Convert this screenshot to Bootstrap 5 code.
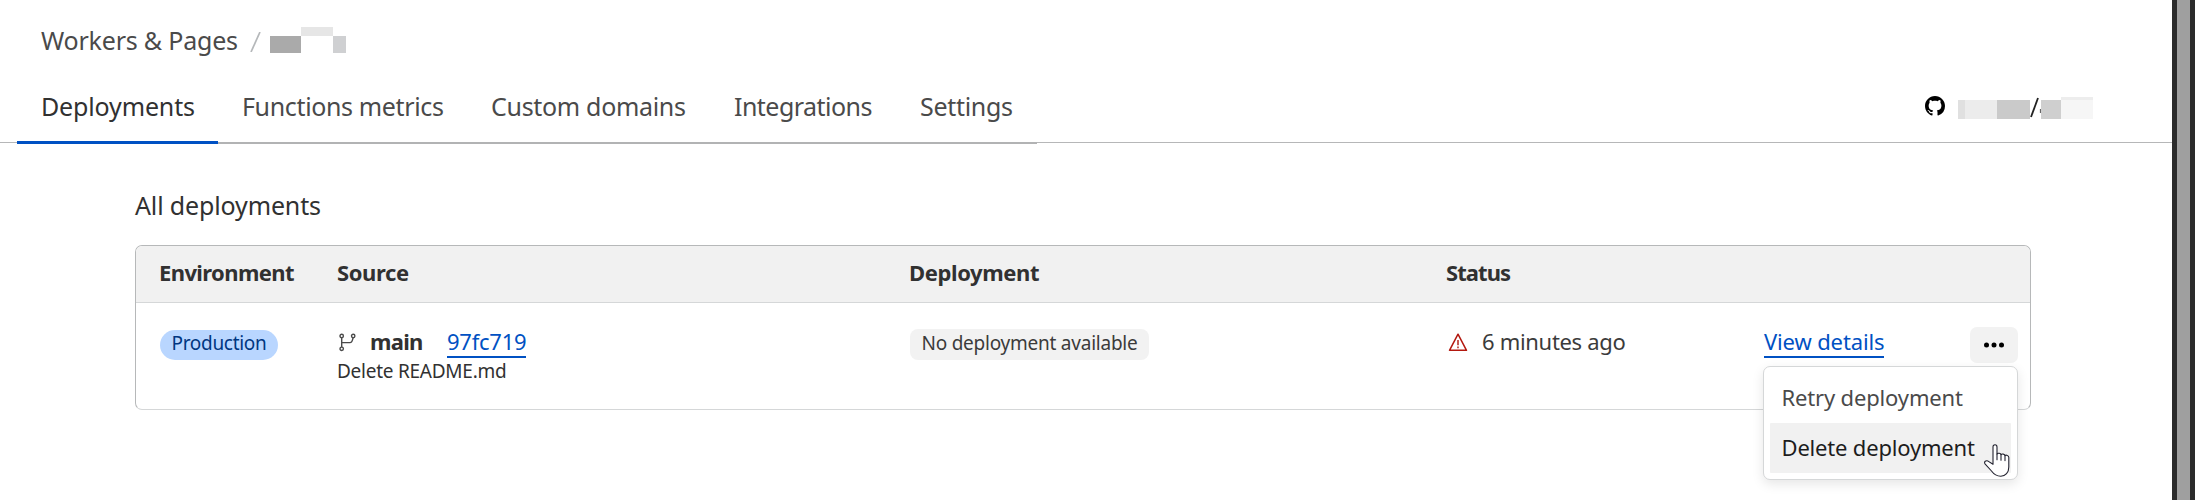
<!DOCTYPE html>
<html lang="en">
<head>
<meta charset="utf-8">
<title>Workers &amp; Pages</title>
<link href="https://cdn.jsdelivr.net/npm/bootstrap@5.3.0/dist/css/bootstrap.min.css" rel="stylesheet">
<script src="https://cdn.jsdelivr.net/npm/bootstrap@5.3.0/dist/js/bootstrap.bundle.min.js"></script>
<style>
body{font-family:"Noto Sans",sans-serif;font-size:22px;color:#313131;height:500px;overflow:hidden;background:#fff}
.page-main{width:2172px}
.window-edge{width:23px;background:#9f9f9f;border:solid #2b2b2b;border-width:0 5px}
.crumbs{padding:20px 0 0 41px;height:60px;font-size:25px;line-height:40px;color:#4a4a4a;letter-spacing:-.2px}
.crumb-slash{margin-left:12px;width:11px;height:20px;margin-top:12px}
.crumb-blocks{margin:7px 0 0 9px}
.tabbar{height:83px;border-bottom:1px solid #b6b7b8}
.tabs{padding-left:17px;margin-bottom:-2px;font-size:25px;line-height:40px}
.tabs .tab{padding:0 0 16px 24px;border-bottom:2px solid #b2b3b4;color:#4a4a4a;white-space:nowrap;text-decoration:none}
.tabs .tab.active{padding-bottom:15px;border-bottom:3px solid #0051c3;color:#313131}
.repo{margin:0 78px 23px 0}
.section-title{margin:42px 0 0 135px;font-size:25px;line-height:40px;letter-spacing:-.14px;font-weight:400}
.deploys{width:1896px;margin:20px 0 0 135px;border:1px solid #b6b8b9;border-bottom-color:#d5d7d8;border-radius:7px}
.deploys .cols{display:grid;grid-template-columns:178px 572px 537px 317px 1fr;padding-left:24px}
.head-row{height:57px;line-height:53px;font-weight:700;background:#f1f1f1;border-bottom:1px solid #d5d7d8;border-radius:6px 6px 0 0}
.head-row span{margin-left:-1px}
.body-row{height:106px;padding-top:24px;line-height:29px}
.pill{display:inline-block;margin-top:2px;height:30px;width:118px;text-align:center;line-height:27px;border-radius:15px;background:#b9d6ff;color:#003681;font-size:19px;letter-spacing:-.3px}
.none{display:inline-block;margin-top:1px;height:31px;width:239px;text-align:center;line-height:29px;border-radius:8px;background:#f2f2f2;font-size:19px;letter-spacing:-.237px;color:#3b3b3b}
.lnk{display:inline-block;color:#0051c3;border-bottom:2px solid #0051c3;text-decoration:none;white-space:nowrap}
.commit{font-size:19px;line-height:24px;letter-spacing:-.25px;margin:1px 0 0 -1px}
.more{position:relative;width:48px;height:36px;border-radius:7px;background:#f2f2f2}
.menu{position:absolute;right:0;top:39px;width:255px;height:114px;padding:6px;background:#fff;border:1px solid #d5d7d8;border-radius:7px;box-shadow:0 4px 12px rgba(0,0,0,.1)}
.menu .item{height:50px;line-height:49px;padding-left:11.500px;color:#4a4a4a;white-space:nowrap;letter-spacing:-.158px}
.menu .item.hot{background:#f1f1f1;color:#1d1d1d;border-radius:1px;letter-spacing:-.183px}
.pointer{position:absolute;left:220px;top:77px}
</style>
</head>
<body class="d-flex">
<main class="page-main flex-shrink-0">
  <div class="crumbs d-flex">
    <span>Workers &amp; Pages</span>
    <svg class="crumb-slash" viewBox="0 0 11 20"><path d="M1 20 10 0" stroke="#b5b8ba" stroke-width="1.7" fill="none"/></svg>
    <svg class="crumb-blocks" width="76" height="26" viewBox="0 0 76 26" shape-rendering="crispEdges"><path fill="#aaa" d="M0 9h31v17H0z"/><path fill="#e6e6e6" d="M31 0h32v9H31z"/><path fill="#cfd0d2" d="M63 9h13v17H63z"/></svg>
  </div>
  <div class="tabbar d-flex justify-content-between align-items-end">
    <nav class="tabs d-flex align-items-end">
      <a class="tab active" style="width:201px;letter-spacing:-.15px">Deployments</a>
      <a class="tab" style="width:249px;letter-spacing:-.355px">Functions metrics</a>
      <a class="tab" style="width:243px;letter-spacing:-.312px">Custom domains</a>
      <a class="tab" style="width:186px;letter-spacing:-.53px">Integrations</a>
      <a class="tab" style="width:141px;letter-spacing:-.307px">Settings</a>
    </nav>
    <div class="repo d-flex">
      <svg width="20" height="20" viewBox="0 0 16 16" fill="#000" style="margin-right:13px"><path d="M8 0C3.58 0 0 3.58 0 8c0 3.54 2.29 6.53 5.47 7.59.4.07.55-.17.55-.38 0-.19-.01-.82-.01-1.49-2.01.37-2.53-.49-2.69-.94-.09-.23-.48-.94-.82-1.13-.28-.15-.68-.52-.01-.53.63-.01 1.08.58 1.23.82.72 1.21 1.87.87 2.33.66.07-.52.28-.87.51-1.07-1.78-.2-3.64-.89-3.64-3.95 0-.87.31-1.59.82-2.15-.08-.2-.36-1.02.08-2.12 0 0 .67-.21 2.2.82.64-.18 1.32-.27 2-.27s1.36.09 2 .27c1.53-1.04 2.2-.82 2.2-.82.44 1.1.16 1.92.08 2.12.51.56.82 1.27.82 2.15 0 3.07-1.87 3.75-3.65 3.95.29.25.54.73.54 1.48 0 1.07-.01 1.93-.01 2.2 0 .21.15.46.55.38A8.01 8.01 0 0 0 16 8c0-4.42-3.58-8-8-8"/></svg>
      <svg width="136" height="23" viewBox="0 0 136 23"><g shape-rendering="crispEdges"><path fill="#e0e0e0" d="M0 4h7v19H0z"/><path fill="#ececec" d="M7 4h32v19H7z"/><path fill="#cacaca" d="M39 4h33v19H39z"/><path fill="#cfcfcf" d="M83 4h20v19H83z"/><path fill="#ededed" d="M103 1h32v3h-32z"/><path fill="#f6f6f6" d="M103 4h32v19h-32z"/></g><path d="M73 21 80 2" stroke="#222" stroke-width="1.8"/><path d="M82.4 13v4" stroke="#555" stroke-width="1"/></svg>
    </div>
  </div>
  <h2 class="section-title">All deployments</h2>
  <section class="deploys">
    <div class="cols head-row">
      <span style="letter-spacing:-.609px">Environment</span>
      <span style="letter-spacing:-.384px">Source</span>
      <span style="letter-spacing:-.384px">Deployment</span>
      <span style="letter-spacing:-.939px">Status</span>
    </div>
    <div class="cols body-row">
      <div><span class="pill">Production</span></div>
      <div>
        <div class="d-flex">
          <svg width="18" height="19" viewBox="0 0 18 19" style="margin:6px 15px 0 1px" fill="none" stroke="#4a4a4a" stroke-width="1.4"><circle cx="2.7" cy="3" r="1.7"/><circle cx="2.7" cy="15.8" r="1.7"/><circle cx="14.2" cy="3" r="1.7"/><path d="M2.7 5v9M2.7 9.6h8.2c2 0 2.600-1.600 3.100-4.800"/></svg>
          <b style="width:77px;letter-spacing:-.735px;margin-left:-2px">main</b>
          <a class="lnk" style="letter-spacing:-.244px">97fc719</a>
        </div>
        <div class="commit">Delete README.md</div>
      </div>
      <div><span class="none">No deployment available</span></div>
      <div class="d-flex">
        <svg width="20" height="20" viewBox="0 0 20 20" style="margin:5px 14px 0 1px" fill="none" stroke="#b3180f" stroke-width="1.5"><path d="M10 2.200 18.500 18.300H1.500Z" stroke-linejoin="round"/><path d="M10 8v5.200M10 14.400v1.800" stroke="#c04a43" stroke-width="1.800"/></svg>
        <span style="letter-spacing:-.31px;color:#3b3b3b">6 minutes ago</span>
      </div>
      <div class="d-flex">
        <div style="width:206px"><a class="lnk ps-0" style="letter-spacing:-.13px">View details</a></div>
        <div class="more">
          <svg width="48" height="36" viewBox="0 0 48 36" class="d-block"><circle cx="16.500" cy="18" r="2.500"/><circle cx="24" cy="18" r="2.500"/><circle cx="31.500" cy="18" r="2.500"/></svg>
          <div class="menu">
            <div class="item">Retry deployment</div>
            <div class="item hot">Delete deployment</div>
            <svg class="pointer" width="27" height="34" viewBox="0 0 27 34" stroke="#22222f" stroke-width="1.100" stroke-linejoin="round" stroke-linecap="round"><path d="M9 20.300V3c0-3 4-3 4 0v7c.5-1.200 3.800-1 4 .6.800-1 3.800-.6 4 1 1-.9 3.800-.2 3.800 1.700V23c0 5.500-3.300 9.200-8 9.200-4.300 0-6.800-1.700-9.300-5.200L1 19.800c-1.300-2.300 1-3.600 3-2.700Z" fill="#fff"/><path d="M13 10v5.800M17 10.600v5.600M21 11.600v5" fill="none"/></svg>
          </div>
        </div>
      </div>
    </div>
  </section>
</main>
<aside class="window-edge flex-shrink-0"></aside>
</body>
</html>
